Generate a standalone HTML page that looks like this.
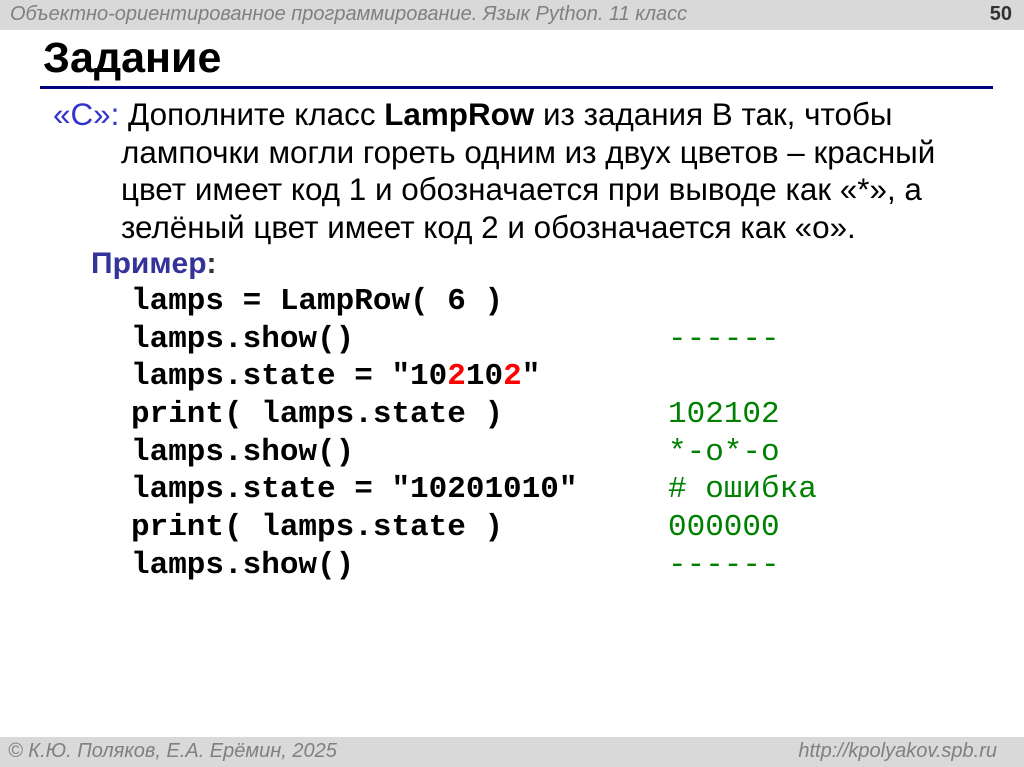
<!DOCTYPE html>
<html><head><meta charset="utf-8"><style>
body{margin:0;width:1024px;height:767px;position:relative;background:#fff;overflow:hidden;font-family:"Liberation Sans",sans-serif}
.hb{position:absolute;left:0;top:0;width:1024px;height:30px;background:#d9d9d9}
.fb{position:absolute;left:0;top:737px;width:1024px;height:30px;background:#d9d9d9}
.gi{position:absolute;color:#808080;font-style:italic;font-size:20px;white-space:nowrap}
.t{position:absolute;white-space:nowrap}
.c{position:absolute;white-space:nowrap;font-family:"Liberation Mono",monospace;font-weight:bold;font-size:31px;left:131px}
.g{color:#008000;font-weight:normal}
.r{color:#ff0000}
</style></head><body>
<div class="hb"></div>
<div class="gi" style="left:10px;top:3px">Объектно-ориентированное программирование. Язык Python. 11 класс</div>
<div class="t" style="right:12px;top:3px;font-weight:bold;font-size:20px;color:#333">50</div>
<div class="t" style="left:43px;top:34px;font-size:43px;font-weight:bold">Задание</div>
<div style="position:absolute;left:40px;top:86px;width:953px;height:3px;background:#000080"></div>
<div class="t" style="font-size:31.4px;left:53px;top:96px;line-height:37.5px">
<span style="color:#3333cc">«С»:</span> Дополните класс <b>LampRow</b> из задания В так, чтобы<br>
<span style="padding-left:68px">лампочки могли гореть одним из двух цветов – красный</span><br>
<span style="padding-left:68px">цвет имеет код 1 и обозначается при выводе как «*», а</span><br>
<span style="padding-left:68px">зелёный цвет имеет код 2 и обозначается как «о».</span>
</div>
<div class="t" style="left:91px;top:247px;font-size:30px;font-weight:bold;color:#333399">Пример<span style="color:#333">:</span></div>
<div class="c" style="top:284px">lamps = LampRow( 6 )</div>
<div class="c" style="top:322px">lamps.show()</div>
<div class="c" style="top:359px">lamps.state = "10<span class="r">2</span>10<span class="r">2</span>"</div>
<div class="c" style="top:397px">print( lamps.state )</div>
<div class="c" style="top:435px">lamps.show()</div>
<div class="c" style="top:472px">lamps.state = "10201010"</div>
<div class="c" style="top:510px">print( lamps.state )</div>
<div class="c" style="top:548px">lamps.show()</div>
<div class="c g" style="left:668px;top:322px">------</div>
<div class="c g" style="left:668px;top:397px">102102</div>
<div class="c g" style="left:668px;top:435px">*-o*-o</div>
<div class="c g" style="left:668px;top:472px"># ошибка</div>
<div class="c g" style="left:668px;top:510px">000000</div>
<div class="c g" style="left:668px;top:548px">------</div>
<div class="fb"></div>
<div class="gi" style="left:8px;top:740px">© К.Ю. Поляков, Е.А. Ерёмин, 2025</div>
<div class="gi" style="right:27px;top:740px">http://kpolyakov.spb.ru</div>
</body></html>
